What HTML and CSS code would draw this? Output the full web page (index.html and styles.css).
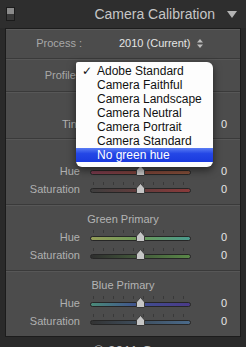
FILE: index.html
```html
<!DOCTYPE html>
<html lang="en">
<head>
    <meta charset="UTF-8">
    <meta name="viewport" content="width=device-width, initial-scale=1.0">
    <title>Camera Calibration</title>
    <link rel="stylesheet" href="styles.css">
</head>
<body>
    <div class="cc_window">
        <div class="cc_header">
            <div class="cc_switch"><span class="cc_switch_on"></span><span class="cc_switch_off"></span></div>
            <div class="cc_title">Camera Calibration</div>
            <svg class="cc_caret" width="10" height="7" viewBox="0 0 10 7"><path d="M0 0H10L5 7Z" fill="#b4b4b4"/></svg>
        </div>

        <div class="cc_panel">
            <div class="cc_section cc_process">
                <div class="cc_pick_row">
                    <span class="cc_pick_label">Process :</span>
                    <span class="cc_pick_value">2010 (Current)</span>
                    <svg class="cc_updown" width="6" height="9" viewBox="0 0 6 9"><path d="M3 0L6 3.5H0Z M3 9L6 5.5H0Z" fill="#bdbdbd"/></svg>
                </div>
            </div>

            <div class="cc_section cc_profile">
                <div class="cc_pick_row">
                    <span class="cc_pick_label">Profile :</span>
                    <span class="cc_pick_value">Adobe Standard</span>
                    <svg class="cc_updown" width="6" height="9" viewBox="0 0 6 9"><path d="M3 0L6 3.5H0Z M3 9L6 5.5H0Z" fill="#bdbdbd"/></svg>
                </div>
            </div>

            <div class="cc_section cc_shadows">
                <div class="cc_section_title">Shadows</div>
                <div class="cc_slider_row">
                    <span class="cc_label">Tint</span>
                    <div class="cc_track cc_tint"><svg class="cc_thumb" width="9" height="11" viewBox="0 0 9 11"><path d="M4.5 0.5L8.5 5V10.5H0.5V5Z" fill="#c6c6c6" stroke="#3a3a3a"/></svg></div>
                    <span class="cc_value">0</span>
                </div>
            </div>

            <div class="cc_section">
                <div class="cc_section_title">Red Primary</div>
                <div class="cc_slider_row">
                    <span class="cc_label">Hue</span>
                    <div class="cc_track cc_red_hue"><svg class="cc_thumb" width="9" height="11" viewBox="0 0 9 11"><path d="M4.5 0.5L8.5 5V10.5H0.5V5Z" fill="#c6c6c6" stroke="#3a3a3a"/></svg></div>
                    <span class="cc_value">0</span>
                </div>
                <div class="cc_slider_row">
                    <span class="cc_label">Saturation</span>
                    <div class="cc_track cc_red_sat"><svg class="cc_thumb" width="9" height="11" viewBox="0 0 9 11"><path d="M4.5 0.5L8.5 5V10.5H0.5V5Z" fill="#c6c6c6" stroke="#3a3a3a"/></svg></div>
                    <span class="cc_value">0</span>
                </div>
            </div>

            <div class="cc_section">
                <div class="cc_section_title">Green Primary</div>
                <div class="cc_slider_row">
                    <span class="cc_label">Hue</span>
                    <div class="cc_track cc_green_hue"><svg class="cc_thumb" width="9" height="11" viewBox="0 0 9 11"><path d="M4.5 0.5L8.5 5V10.5H0.5V5Z" fill="#c6c6c6" stroke="#3a3a3a"/></svg></div>
                    <span class="cc_value">0</span>
                </div>
                <div class="cc_slider_row">
                    <span class="cc_label">Saturation</span>
                    <div class="cc_track cc_green_sat"><svg class="cc_thumb" width="9" height="11" viewBox="0 0 9 11"><path d="M4.5 0.5L8.5 5V10.5H0.5V5Z" fill="#c6c6c6" stroke="#3a3a3a"/></svg></div>
                    <span class="cc_value">0</span>
                </div>
            </div>

            <div class="cc_section">
                <div class="cc_section_title">Blue Primary</div>
                <div class="cc_slider_row">
                    <span class="cc_label">Hue</span>
                    <div class="cc_track cc_blue_hue"><svg class="cc_thumb" width="9" height="11" viewBox="0 0 9 11"><path d="M4.5 0.5L8.5 5V10.5H0.5V5Z" fill="#c6c6c6" stroke="#3a3a3a"/></svg></div>
                    <span class="cc_value">0</span>
                </div>
                <div class="cc_slider_row">
                    <span class="cc_label">Saturation</span>
                    <div class="cc_track cc_blue_sat"><svg class="cc_thumb" width="9" height="11" viewBox="0 0 9 11"><path d="M4.5 0.5L8.5 5V10.5H0.5V5Z" fill="#c6c6c6" stroke="#3a3a3a"/></svg></div>
                    <span class="cc_value">0</span>
                </div>
            </div>
        </div>

        <div class="cc_next">© 2011 G</div>

        <!-- open profile popup -->
        <ul class="cc_menu">
            <li class="cc_menu_item cc_checked">Adobe Standard</li>
            <li class="cc_menu_item">Camera Faithful</li>
            <li class="cc_menu_item">Camera Landscape</li>
            <li class="cc_menu_item">Camera Neutral</li>
            <li class="cc_menu_item">Camera Portrait</li>
            <li class="cc_menu_item">Camera Standard</li>
            <li class="cc_menu_item cc_active">No green hue</li>
        </ul>
    </div>
</body>
</html>
```

FILE: styles.css
```css
* {
    margin: 0;
    padding: 0;
    box-sizing: border-box;
}

body {
    width: 246px;
    height: 347px;
    overflow: hidden;
    background: #2a2a2a;
    font-family: "Liberation Sans", Arial, sans-serif;
}

.cc_window {
    position: relative;
    height: 347px;
    overflow: hidden;
}

/* header */
.cc_header {
    height: 28px;
    display: flex;
    align-items: center;
    padding: 0 9px 0 6px;
    background: #2e2e2e;
}

.cc_switch {
    width: 9px;
    height: 14px;
    border: 1px solid #1b1b1b;
    display: flex;
    flex-direction: column;
}

.cc_switch_on {
    flex: 1;
    background: #8a8a8a;
}

.cc_switch_off {
    flex: 1;
    background: #383838;
}

.cc_title {
    margin-left: auto;
    font-size: 14px;
    color: #c6c6c6;
}

.cc_caret {
    margin-left: 12px;
}

/* panel */
.cc_panel {
    margin: 0 5px;
    border: 1px solid #1c1c1c;
    background: #4c4c4c;
}

.cc_section {
    height: 66px;
    padding-top: 7px;
    border-top: 1px solid #3a3a3a;
    box-shadow: inset 0 1px 0 #575757;
}

.cc_process {
    height: 29px;
    padding-top: 5px;
    border-top: none;
    box-shadow: inset 0 1px 0 #5a5a5a;
}

.cc_profile {
    height: 33px;
}

.cc_shadows {
    height: 47px;
}

.cc_section_title {
    height: 14px;
    line-height: 14px;
    margin-bottom: 2px;
    text-align: center;
    font-size: 11px;
    color: #b4b4b4;
}

.cc_pick_row {
    height: 18px;
    display: flex;
    align-items: center;
    font-size: 11px;
}

.cc_pick_label {
    width: 76px;
    text-align: right;
    color: #a8a8a8;
}

.cc_pick_value {
    margin-left: 37px;
    color: #e4e4e4;
}

.cc_updown {
    margin-left: 6px;
}

.cc_slider_row {
    height: 18px;
    display: flex;
    align-items: center;
    font-size: 11px;
}

.cc_label {
    width: 74px;
    text-align: right;
    color: #b0b0b0;
}

.cc_value {
    flex: 1;
    text-align: right;
    padding-right: 13px;
    color: #e6e6e6;
}

.cc_track {
    position: relative;
    width: 101px;
    height: 5px;
    margin: 3px 0 0 10px;
    border: 1px solid #262626;
    border-radius: 3px;
}

.cc_track::before {
    content: "";
    position: absolute;
    left: 2px;
    right: 2px;
    top: -7px;
    height: 3px;
    background: repeating-linear-gradient(to right, rgba(0,0,0,0.25) 0 1px, transparent 1px 10px);
}

.cc_thumb {
    position: absolute;
    left: calc(50% - 4.5px);
    top: -6px;
}

.cc_tint { background: linear-gradient(to right, #4f8a4a, #8a4a86); }
.cc_red_hue { background: linear-gradient(to right, #7a3a4e, #7c4238 50%, #86503a); }
.cc_red_sat { background: linear-gradient(to right, #3e3e3e, #8a3a3a); }
.cc_green_hue { background: linear-gradient(to right, #949c58, #6a9a58 50%, #4a9a8e); }
.cc_green_sat { background: linear-gradient(to right, #2e2e2e, #5a8848); }
.cc_blue_hue { background: linear-gradient(to right, #4a8a78, #404e90 50%, #4a3a88); }
.cc_blue_sat { background: linear-gradient(to right, #333333, #4a6a8a); }

.cc_next {
    padding-top: 6px;
    text-align: center;
    font-size: 14px;
    color: #bdbdbd;
}

/* popup menu */
.cc_menu {
    position: absolute;
    left: 76px;
    top: 62px;
    width: 137px;
    height: 105px;
    padding-top: 2px;
    list-style: none;
    background: #fdfdfd;
    border-radius: 2px 6px 6px 6px;
    box-shadow: 0 3px 8px rgba(0,0,0,0.55);
}

.cc_menu_item {
    position: relative;
    height: 14px;
    line-height: 14px;
    padding-left: 21px;
    font-size: 12px;
    color: #111;
}

.cc_checked::before {
    content: "✓";
    position: absolute;
    left: 6px;
    font-family: "DejaVu Sans", sans-serif;
    font-size: 12px;
}

.cc_active {
    color: #fff;
    background: linear-gradient(#5a7cf4, #2447e6 40%, #1a3ade);
}
```
